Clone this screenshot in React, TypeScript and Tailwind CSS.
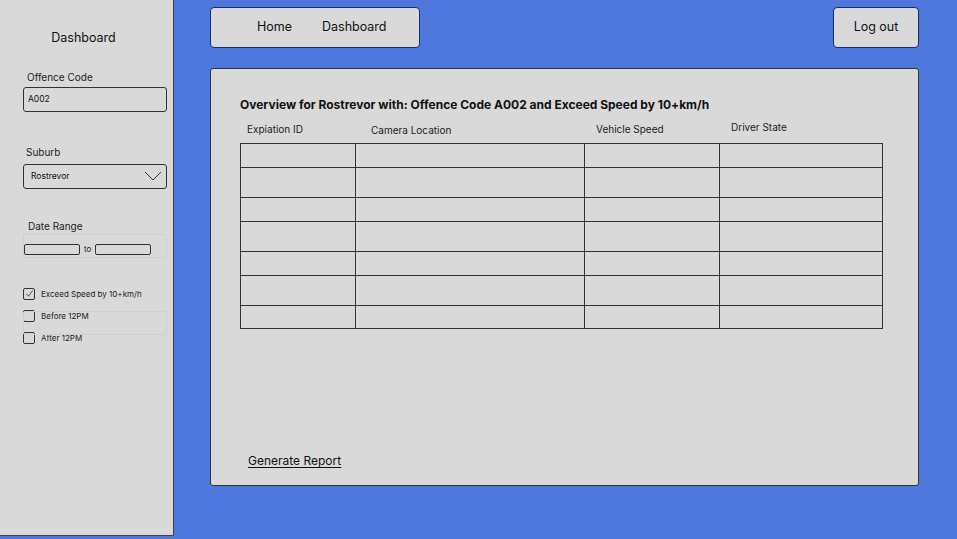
const rows = [24, 30, 24, 30, 24, 30, 23];

function Checkbox({ checked, label }: { checked?: boolean; label: string }) {
  return (
    <div className="flex items-center gap-[6px]">
      <div className="w-[12px] h-[12px] border border-[#333] rounded-[2px] flex items-center justify-center">
        {checked && (
          <svg width="9" height="9" viewBox="0 0 10 10" fill="none">
            <path d="M1.5 5.5 L4 8 L8.5 1.5" stroke="#333" strokeWidth="0.9" />
          </svg>
        )}
      </div>
      <span className="text-[8px] text-[#222]">{label}</span>
    </div>
  );
}

function Sidebar() {
  return (
    <div className="w-[174px] h-[536px] bg-[#d9d9d9] border-r border-b border-[#444] shrink-0 flex flex-col">
      <div className="text-center text-[12.5px] text-[#111] mt-[29px] pr-[6px]">Dashboard</div>

      <div className="pl-[27px] mt-[21px] text-[10px] leading-[16px] text-[#222]">Offence Code</div>
      <div className="ml-[23px] mt-[2px] w-[144px] h-[25px] border border-[#333] rounded-[3px] flex items-center pl-[4px] text-[8.5px] text-[#111]">
        A002
      </div>

      <div className="pl-[26px] mt-[32px] text-[10px] leading-[16px] text-[#222]">Suburb</div>
      <div className="ml-[23px] mt-[4px] w-[144px] h-[25px] border border-[#333] rounded-[3px] flex items-center justify-between pl-[7px] pr-[4px] text-[8.5px] text-[#111]">
        <span>Rostrevor</span>
        <svg width="18" height="12" viewBox="0 0 18 12" fill="none">
          <path d="M1 2 L9 10 L17 2" stroke="#333" strokeWidth="1" />
        </svg>
      </div>

      <div className="pl-[28px] mt-[29px] text-[10px] leading-[16px] text-[#222]">Date Range</div>
      <div className="ml-[23px] mt-0 w-[144px] h-[24px] border border-[#cfcfcf] rounded-[2px] flex items-end pb-[2px]">
        <div className="w-[56px] h-[11px] border border-[#333] rounded-[2px]" />
        <span className="text-[8px] leading-[11px] text-[#222] mx-[4px]">to</span>
        <div className="w-[56px] h-[11px] border border-[#333] rounded-[2px]" />
      </div>

      <div className="ml-[23px] mt-[30px] flex flex-col gap-[10px]">
        <Checkbox checked label="Exceed Speed by 10+km/h" />
        <div className="relative">
          <div className="absolute left-0 top-[1px] w-[144px] h-[24px] border border-[#cfcfcf] rounded-[2px]" />
          <Checkbox label="Before 12PM" />
        </div>
        <Checkbox label="After 12PM" />
      </div>
    </div>
  );
}

export default function App() {
  return (
    <div
      className="w-[957px] h-[539px] bg-[#4f78dc] flex overflow-hidden"
      style={{ fontFamily: "Inter, 'Noto Sans', sans-serif" }}
    >
      <Sidebar />

      <div className="flex-1 pl-[36px] pr-[38px] pt-[7px] flex flex-col">
        {/* Top nav */}
        <div className="flex justify-between">
          <div className="w-[210px] h-[41px] bg-[#d9d9d9] border border-[#1b2a6b] rounded-[4px] flex items-center text-[12.5px] text-[#111]">
            <span className="ml-[46px]">Home</span>
            <span className="ml-[30px]">Dashboard</span>
          </div>
          <div className="w-[86px] h-[41px] bg-[#d9d9d9] border border-[#1b2a6b] rounded-[4px] flex items-center justify-center text-[12.5px] text-[#111]">
            Log out
          </div>
        </div>

        {/* Main panel */}
        <div className="mt-[20px] h-[418px] bg-[#d9d9d9] border border-[#333] rounded-[3px] pl-[29px] flex flex-col">
          <div className="mt-[27px] text-[12px] font-bold text-[#111]">
            Overview for Rostrevor with: Offence Code A002 and Exceed Speed by 10+km/h
          </div>

          <div className="flex mt-[5px] h-[20px] text-[10px] text-[#222]">
            <span className="w-[115px] pl-[7px] mt-[3px]">Expiation ID</span>
            <span className="w-[229px] pl-[16px] mt-[4px]">Camera Location</span>
            <span className="w-[135px] pl-[12px] mt-[3px]">Vehicle Speed</span>
            <span className="pl-[12px] mt-[1px]">Driver State</span>
          </div>

          <table className="mt-[4px] w-[643px] border-collapse">
            <tbody>
              {rows.map((h, i) => (
                <tr key={i} style={{ height: h }}>
                  <td className="w-[115px] border border-[#333]" />
                  <td className="w-[229px] border border-[#333]" />
                  <td className="w-[135px] border border-[#333]" />
                  <td className="border border-[#333]" />
                </tr>
              ))}
            </tbody>
          </table>

          <div className="mt-auto mb-[15px] ml-[8px] text-[12px] text-[#111] underline underline-offset-2">
            Generate Report
          </div>
        </div>
      </div>
    </div>
  );
}
